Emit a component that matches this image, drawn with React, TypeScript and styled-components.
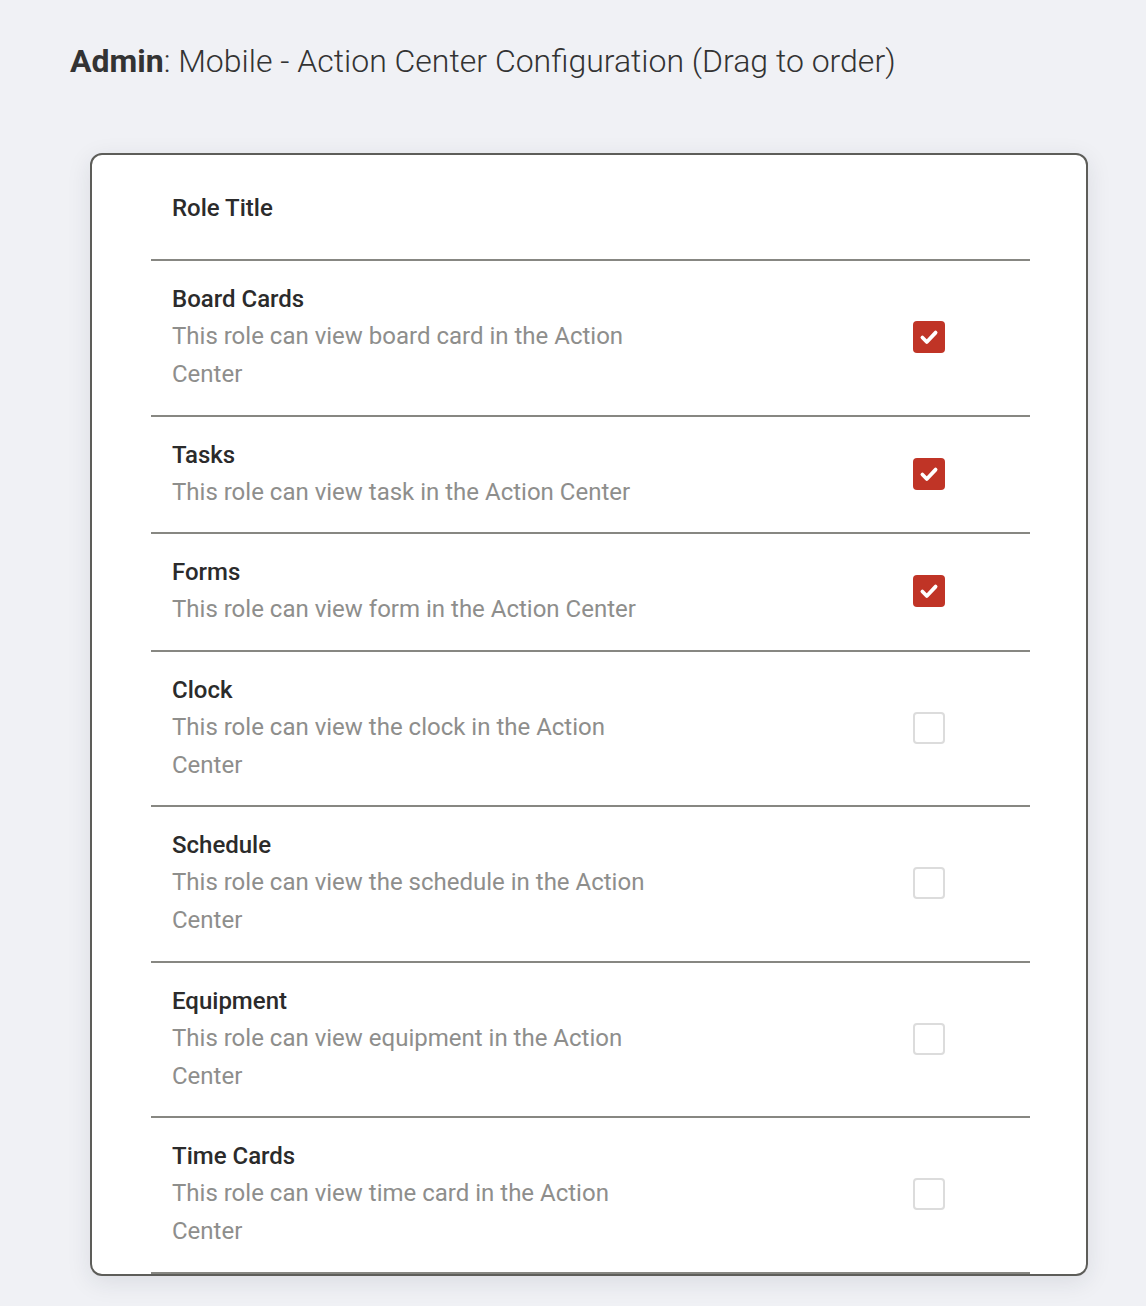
import * as React from "react";
import styled, { createGlobalStyle } from "styled-components";

const GlobalStyle = createGlobalStyle`
  html, body {
    margin: 0;
    padding: 0;
    background-color: #f0f1f5;
    font-family: Roboto, "Liberation Sans", sans-serif;
  }
  * {
    box-sizing: border-box;
  }
`;

const Page = styled.div`
  padding: 40px 58px 33px 70px;
`;

const Heading = styled.h1`
  margin: 0 0 71px;
  font-size: 32px;
  line-height: 42px;
  font-weight: 300;
  color: #333;
  b {
    font-weight: 700;
  }
`;

const Card = styled.div`
  margin-left: 20px;
  width: 998px;
  border: 2px solid #5d5d59;
  border-radius: 12px;
  background-color: #fff;
  box-shadow: 0 6px 24px rgba(30, 35, 60, 0.1);
  overflow: hidden;
  padding: 0 56px 0 59px;
`;

const Header = styled.div`
  padding: 36px 21px 34px;
  font-size: 24px;
  line-height: 34px;
  font-weight: 500;
  color: #2b2b2b;
  border-bottom: 2px solid #878782;
`;

const Row = styled.div`
  display: flex;
  align-items: center;
  justify-content: space-between;
  padding: 20px 85px 21.5px 21px;
  border-bottom: 2px solid #878782;
`;

const Text = styled.div`
  max-width: 490px;
`;

const Title = styled.div`
  font-size: 24px;
  line-height: 36px;
  font-weight: 500;
  color: #2b2b2b;
`;

const Desc = styled.div`
  font-size: 24px;
  line-height: 38px;
  color: #8e8e8c;
`;

const Box = styled.div<{ $checked: boolean }>`
  width: 32px;
  height: 32px;
  flex-shrink: 0;
  border-radius: 4px;
  display: flex;
  align-items: center;
  justify-content: center;
  background-color: ${(p) => (p.$checked ? "#c03426" : "#fff")};
  border: ${(p) => (p.$checked ? "none" : "2px solid #dcdcdc")};
`;

const items = [
  { title: "Board Cards", desc: "This role can view board card in the Action Center", on: true },
  { title: "Tasks", desc: "This role can view task in the Action Center", on: true },
  { title: "Forms", desc: "This role can view form in the Action Center", on: true },
  { title: "Clock", desc: "This role can view the clock in the Action Center", on: false },
  { title: "Schedule", desc: "This role can view the schedule in the Action Center", on: false },
  { title: "Equipment", desc: "This role can view equipment in the Action Center", on: false },
  { title: "Time Cards", desc: "This role can view time card in the Action Center", on: false },
];

const Check = ({ checked }: { checked: boolean }) => (
  <Box $checked={checked}>
    {checked && (
      <svg width="22" height="22" viewBox="0 0 20 20">
        <path d="M4 10.5 L8 14.5 L16 6" fill="none" stroke="#fff" strokeWidth="3.4" strokeLinecap="round" strokeLinejoin="round" />
      </svg>
    )}
  </Box>
);

export default function App() {
  return (
    <Page>
      <GlobalStyle />
      <Heading>
        <b>Admin</b>: Mobile - Action Center Configuration (Drag to order)
      </Heading>
      <Card>
        <Header>Role Title</Header>
        {items.map((it) => (
          <Row key={it.title}>
            <Text>
              <Title>{it.title}</Title>
              <Desc>{it.desc}</Desc>
            </Text>
            <Check checked={it.on} />
          </Row>
        ))}
      </Card>
    </Page>
  );
}
